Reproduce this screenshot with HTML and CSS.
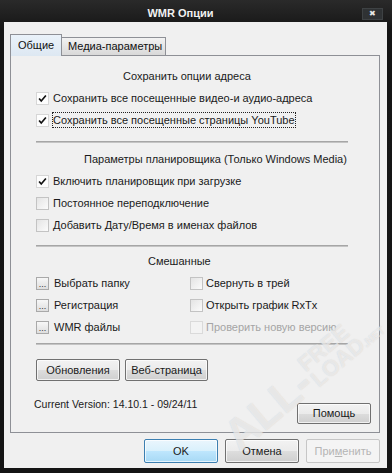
FILE: index.html
```html
<!DOCTYPE html>
<html lang="ru">
<head>
<meta charset="utf-8">
<title>WMR Опции</title>
<link rel="stylesheet" href="styles.css">
</head>
<body>
<div class="window">
  <div class="titlebar">
    <div class="title">WMR Опции</div>
    <div class="close">&#x2716;</div>
  </div>
  <div class="client">
    <div class="tabs">
      <div class="tab active">Общие</div>
      <div class="tab">Медиа-параметры</div>
    </div>
    <div class="panel">
      <div class="heading h1">Сохранить опции адреса</div>
      <div class="row"><span class="cb checked"><svg viewBox="0 0 13 13" width="13" height="13"><polyline points="2.5,6.5 5,9.5 10.5,3" fill="none" stroke="#111" stroke-width="2"/></svg></span><span class="lbl">Сохранить все посещенные видео-и аудио-адреса</span></div>
      <div class="row"><span class="cb checked"><svg viewBox="0 0 13 13" width="13" height="13"><polyline points="2.5,6.5 5,9.5 10.5,3" fill="none" stroke="#111" stroke-width="2"/></svg></span><span class="lbl focus">Сохранить все посещенные страницы YouTube</span></div>
      <div class="sep s1"></div>
      <div class="heading h2">Параметры планировщика (Только Windows Media)</div>
      <div class="row"><span class="cb checked"><svg viewBox="0 0 13 13" width="13" height="13"><polyline points="2.5,6.5 5,9.5 10.5,3" fill="none" stroke="#111" stroke-width="2"/></svg></span><span class="lbl">Включить планировщик при загрузке</span></div>
      <div class="row"><span class="cb"></span><span class="lbl">Постоянное переподключение</span></div>
      <div class="row"><span class="cb"></span><span class="lbl">Добавить Дату/Время в именах файлов</span></div>
      <div class="sep s2"></div>
      <div class="heading h3">Смешанные</div>
      <div class="misc">
        <div class="col left">
          <div class="row"><span class="dots">...</span><span class="lbl">Выбрать папку</span></div>
          <div class="row"><span class="dots">...</span><span class="lbl">Регистрация</span></div>
          <div class="row"><span class="dots">...</span><span class="lbl">WMR файлы</span></div>
        </div>
        <div class="col right">
          <div class="row"><span class="cb"></span><span class="lbl tight">Свернуть в трей</span></div>
          <div class="row"><span class="cb"></span><span class="lbl tight">Открыть график RxTx</span></div>
          <div class="row disabled"><span class="cb"></span><span class="lbl tight">Проверить новую версию</span></div>
        </div>
      </div>
      <div class="sep s3"></div>
      <div class="btnrow">
        <div class="btn b-upd">Обновления</div>
        <div class="btn b-web">Веб-страница</div>
      </div>
      <div class="verrow">
        <div class="ver">Current Version: 14.10.1 - 09/24/11</div>
        <div class="btn b-help">Помощь</div>
      </div>
    </div>
    <div class="footer">
      <div class="btn big ok">OK</div>
      <div class="btn big">Отмена</div>
      <div class="btn big dis">При<u>м</u>енить</div>
    </div>
    <div class="watermark"><span class="wm1">ALL-</span><span class="wm2">FREE<br>LOAD<small>.NET</small></span></div>
  </div>
</div>
</body>
</html>
```

FILE: styles.css
```css
* { box-sizing: border-box; }
html, body { margin: 0; padding: 0; }
body {
  width: 392px;
  height: 473px;
  overflow: hidden;
  background: #fff;
  font-family: "Liberation Sans", Arial, sans-serif;
  font-size: 11px;
  color: #1a1a1a;
}
.window {
  width: 392px;
  height: 473px;
  background: linear-gradient(#2a2a2a, #151515 30px, #141414);
  padding: 0 5px 5px 4px;
  display: flex;
  flex-direction: column;
}
.titlebar {
  height: 22px;
  flex: none;
  display: flex;
  align-items: center;
  position: relative;
}
.title {
  flex: 1;
  text-align: center;
  padding-right: 30px;
  padding-top: 3px;
  color: #f2f2f2;
  font-weight: bold;
  font-size: 11px;
}
.close {
  position: absolute;
  right: 4px;
  top: 8px;
  width: 21px;
  height: 12px;
  background: #2f3234;
  border: 1px solid #3e4244;
  color: #e8e8e8;
  font-size: 8px;
  line-height: 10px;
  text-align: center;
}
.client {
  flex: 1;
  background: #f0f0f0;
  padding: 11px 7px 0 6px;
  position: relative;
  overflow: hidden;
}
.tabs {
  display: flex;
  align-items: flex-end;
  height: 22px;
  position: relative;
  z-index: 2;
}
.tab {
  height: 18px;
  line-height: 17px;
  padding: 0 6px;
  border: 1px solid #8e9096;
  border-bottom: none;
  background: linear-gradient(#f2f2f2, #e5e5e5 50%, #d9d9d9);
  color: #111;
  white-space: nowrap;
}
.tab.active {
  height: 22px;
  line-height: 20px;
  padding: 0 7px;
  background: linear-gradient(#eaf2fa, #dde8f2);
  margin-bottom: -1px;
  width: 52px;
}
.tab.active + .tab { border-left: none; width: 104px; }
.panel {
  height: 378px;
  border: 1px solid #8e9096;
  background: #f0f0f0;
  padding: 9px 8px 0 25px;
  position: relative;
}
.heading {
  height: 22px;
  line-height: 22px;
  white-space: nowrap;
}
.h1 { padding-left: 87px; }
.h2 { padding-left: 48px; }
.h3 { padding-left: 112px; }
.row {
  height: 22px;
  display: flex;
  align-items: center;
}
.cb {
  width: 13px;
  height: 13px;
  flex: none;
  border: 1px solid #c3c3c3;
  background: linear-gradient(135deg, #e4e4e4, #fbfbfb);
  display: flex;
  align-items: center;
  justify-content: center;
}
.cb.checked { background: #fdfdfd; border-color: #d6d6d6; }
.cb svg { display: block; }
.lbl {
  margin-left: 3px;
  padding: 0 1px;
  line-height: 16px;
  white-space: nowrap;
}
.lbl.tight { margin-left: 2px; }
.lbl.focus { outline: 1px dotted #222; outline-offset: -1px; }
.row.disabled .lbl { color: #a5a5a5; }
.row.disabled .cb { border-color: #dadada; background: #f3f3f3; }
.sep {
  height: 2px;
  width: 312px;
  background: #a6a6a6;
  border-bottom: 1px solid #c4c4c4;
}
.s1 { margin-top: 10px; margin-bottom: 5px; }
.s2 { margin-top: 9px; margin-bottom: 3px; }
.s3 { margin-top: 5px; }
.misc {
  display: flex;
}
.col.left { width: 154px; }
.dots {
  width: 13px;
  height: 13px;
  flex: none;
  border: 1px solid #a9a9a9;
  background: linear-gradient(#f7f7f7, #dedede);
  font-size: 9px;
  line-height: 13px;
  text-align: center;
  color: #333;
  overflow: hidden;
}
.dots + .lbl { margin-left: 4px; }
.btn {
  border: 1px solid #707070;
  border-radius: 2px;
  background: linear-gradient(#f2f2f2, #ebebeb 50%, #dddddd 51%, #cfcfcf);
  text-align: center;
  box-shadow: inset 0 0 0 1px rgba(255,255,255,0.7);
  color: #1a1a1a;
}
.btnrow {
  display: flex;
  gap: 5px;
  margin-top: 14px;
}
.btnrow .btn {
  height: 22px;
  line-height: 20px;
}
.b-upd { width: 84px; }
.b-web { width: 83px; }
.verrow {
  display: flex;
  justify-content: space-between;
  align-items: flex-start;
  margin-top: 15px;
}
.ver {
  line-height: 16px;
  margin-left: -2px;
  font-size: 10.5px;
}
.b-help {
  width: 74px;
  height: 21px;
  line-height: 19px;
  margin-top: 7px;
}
.footer {
  display: flex;
  justify-content: flex-end;
  gap: 7px;
  margin-top: 6px;
}
.btn.big {
  width: 74px;
  height: 24px;
  line-height: 22px;
}
.btn.ok {
  border-color: #3c7fb1;
  background: linear-gradient(#eaf6fd, #d9f0fc 50%, #bee6fd 51%, #a7d9f5);
}
.btn.dis {
  border-color: #c6c6c6;
  background: #f4f4f4;
  color: #b5b5b5;
  box-shadow: none;
}
.btn.dis u { text-decoration-color: #b5b5b5; }
.watermark {
  position: absolute;
  left: 210px;
  top: 400px;
  transform: rotate(-40deg);
  transform-origin: left top;
  color: rgba(255,255,255,0.55);
  font-weight: bold;
  pointer-events: none;
  display: flex;
  align-items: center;
  gap: 2px;
  text-shadow: 0 0 1px rgba(180,180,180,0.6);
}
.wm1 { font-size: 44px; }
.wm2 { font-size: 22px; line-height: 20px; }
.wm2 small { font-size: 11px; }
```
